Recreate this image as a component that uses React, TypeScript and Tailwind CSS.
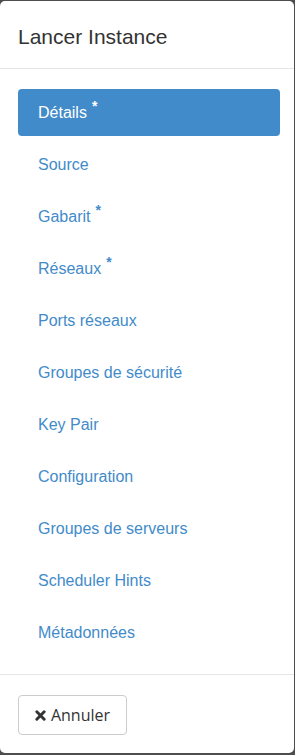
import React from "react";

const items: { label: string; req?: boolean }[] = [
  { label: "Détails", req: true },
  { label: "Source" },
  { label: "Gabarit", req: true },
  { label: "Réseaux", req: true },
  { label: "Ports réseaux" },
  { label: "Groupes de sécurité" },
  { label: "Key Pair" },
  { label: "Configuration" },
  { label: "Groupes de serveurs" },
  { label: "Scheduler Hints" },
  { label: "Métadonnées" },
];

export default function App() {
  return (
    <div className="w-[295px] h-[755px] bg-[#4d4d4d] pt-px pb-[2px] pr-px overflow-hidden">
      <div
        className="h-full bg-white rounded-[5px] flex flex-col"
        style={{ fontFamily: '"Liberation Sans", Arial, sans-serif' }}
      >
        <div className="h-[68px] border-b border-[#e5e5e5] flex items-center pl-[18px] pt-[3px] shrink-0">
          <h4 className="text-[21px] text-[#333] leading-none">Lancer Instance</h4>
        </div>
        <ul className="flex flex-col gap-[5px] pl-[18px] pr-[14px] pt-[20px] pb-[18px] flex-1">
          {items.map((it, i) => (
            <li
              key={it.label}
              className={
                "h-[47px] flex items-center pl-[20px] rounded-[4px] text-[16px] " +
                (i === 0 ? "bg-[#428bca] text-white" : "text-[#428bca]")
              }
            >
              <span>{it.label}</span>
              {it.req && (
                <span className="text-[14px] font-bold leading-none ml-[5px] -mt-[14px]">*</span>
              )}
            </li>
          ))}
        </ul>
        <div className="h-[81px] border-t border-[#e5e5e5] pl-[18px] pt-[20px] shrink-0">
          <button
            className="h-[40px] w-[109px] border border-[#cccccc] rounded-[4px] flex items-center justify-center gap-[5px] text-[16px] text-[#333] bg-white"
            style={{ fontFamily: '"Open Sans", sans-serif' }}
          >
            <svg width="11" height="11" viewBox="0 0 12 12" className="mt-px">
              <path
                d="M2 2 L10 10 M10 2 L2 10"
                stroke="#333"
                strokeWidth="3.2"
                strokeLinecap="round"
              />
            </svg>
            <span>Annuler</span>
          </button>
        </div>
      </div>
    </div>
  );
}
